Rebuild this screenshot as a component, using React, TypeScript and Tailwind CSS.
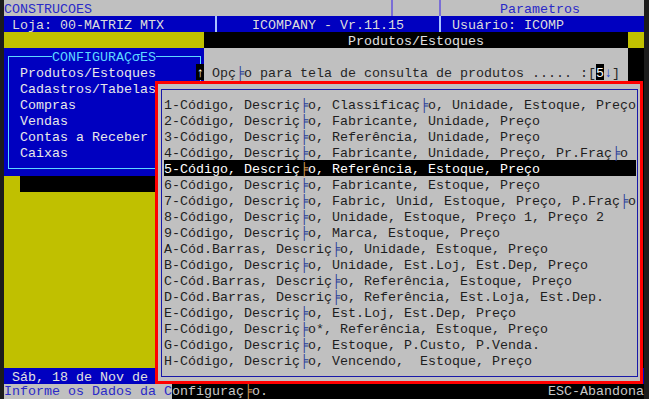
import React from 'react';

const mono = "font-['Liberation_Mono','DejaVu_Sans_Mono',monospace] text-[13.333px] leading-[19px] whitespace-pre";

const items = [
  '1-Código, Descriç╞o, Classificaç╞o, Unidade, Estoque, Preço',
  '2-Código, Descriç╞o, Fabricante, Unidade, Preço',
  '3-Código, Descriç╞o, Referência, Unidade, Preço',
  '4-Código, Descriç╞o, Fabricante, Unidade, Preço, Pr.Fraç╞o',
  '5-Código, Descriç╞o, Referência, Estoque, Preço',
  '6-Código, Descriç╞o, Fabricante, Estoque, Preço',
  '7-Código, Descriç╞o, Fabric, Unid, Estoque, Preço, P.Fraç╞o',
  '8-Código, Descriç╞o, Unidade, Estoque, Preço 1, Preço 2',
  '9-Código, Descriç╞o, Marca, Estoque, Preço',
  'A-Cód.Barras, Descriç╞o, Unidade, Estoque, Preço',
  'B-Código, Descriç╞o, Unidade, Est.Loj, Est.Dep, Preço',
  'C-Cód.Barras, Descriç╞o, Referência, Estoque, Preço',
  'D-Cód.Barras, Descriç╞o, Referência, Est.Loja, Est.Dep.',
  'E-Código, Descriç╞o, Est.Loj, Est.Dep, Preço',
  'F-Código, Descriç╞o*, Referência, Estoque, Preço',
  'G-Código, Descriç╞o, Estoque, P.Custo, P.Venda.',
  'H-Código, Descriç╞o, Vencendo,  Estoque, Preço',
];

const menu = ['Cadastros/Tabelas', 'Compras', 'Vendas', 'Contas a Receber', 'Caixas'];

// the terminal prints "ã" as a box char, keep it
function Txt({ text, bar }: { text: string; bar: string }) {
  const parts = text.split('╞');
  return (
    <>
      {parts.map((p, i) => (
        <React.Fragment key={i}>
          {i > 0 && <span className={bar}>╞</span>}
          {p}
        </React.Fragment>
      ))}
    </>
  );
}

function Sep({ line }: { line: string }) {
  return (
    <span className="inline-flex w-2 h-4 justify-center">
      <span className={line} />
    </span>
  );
}

export default function App() {
  return (
    <div className={`relative w-[649px] h-[399px] overflow-hidden bg-[#1c1c1c] pl-[4px] ${mono}`}>
      <div className="w-[640px] flex flex-col">
        {/* top bar */}
        <div className="h-4 bg-[#c0c0c0] text-[#2a2ac8] flex">
          <span>{'CONSTRUCOES                                     '}</span>
          <Sep line="w-[2px] h-full bg-[#7a6ed6]" />
          <span>{'     '}</span>
          <Sep line="w-[2px] h-full bg-[#7a6ed6]" />
          <span>{'       Parametros'}</span>
        </div>
        <div className="h-4 bg-[#0000c0] text-[#dcdcdc] flex">
          <span>{' Loja: 00-MATRIZ MTX      '}</span>
          <Sep line="w-[2px] h-full bg-[#a9c2ff]" />
          <span>{'    ICOMPANY - Vr.11.15    '}</span>
          <Sep line="w-[2px] h-full bg-[#a9c2ff]" />
          <span>{' Usuário: ICOMP'}</span>
        </div>
        <div className="h-4 flex">
          <div className="w-[200px] bg-[#c0c000]" />
          <div className="w-[424px] bg-black text-[#e0e0e0] text-center">Produtos/Estoques</div>
          <div className="flex-1 bg-[#c0c000]" />
        </div>

        {/* body */}
        <div className="flex h-[320px]">
          <div className="w-[200px] flex flex-col">
            <div className="h-[128px] bg-[#0000c0] relative">
              <div className="absolute left-[4px] right-[3px] top-[8px] bottom-[7px] border border-[#5fd7ff]" />
              <div className="relative h-4 flex pl-[48px]">
                <span className="bg-[#0000c0] text-[#5fd7ff]">CONFIGURAÇσES</span>
              </div>
              <div className="relative h-4 flex justify-between pl-[16px] text-[#e8e8e8]">
                <span>Produtos/Estoques</span>
                <span className="w-2 bg-black text-white text-center">↑</span>
              </div>
              {menu.map((m) => (
                <div key={m} className="relative h-4 pl-[16px] text-[#e8e8e8]">{m}</div>
              ))}
            </div>
            <div className="h-4 flex">
              <div className="w-4 bg-[#c0c000]" />
              <div className="flex-1 bg-black" />
            </div>
            <div className="flex-1 bg-[#c0c000]" />
          </div>
          <div className="w-[424px] bg-[#c0c0c0] text-[#262626]">
            <div className="h-4" />
            <div className="h-4 flex pl-2">
              <span>
                <Txt text="Opç╞o para tela de consulta de produtos ..... :[" bar="text-[#2b3f9a]" />
              </span>
              <span className="bg-black text-white">5</span>
              <span className="text-[#2040d0]">↓</span>
              <span>]</span>
            </div>
          </div>
          <div className="flex-1 bg-black" />
        </div>

        <div className="h-4 bg-[#0000c0] text-[#e0e0e0]">{' Sáb, 18 de Nov de 2023'}</div>
        <div className="h-4 flex bg-black leading-[16px]">
          <span className="bg-[#c0c0c0] text-[#2a2ac8]">Informe os Dados da C</span>
          <span className="flex-1 text-[#c8c8c8]">
            <Txt text="onfiguraç╞o." bar="text-[#d49a50]" />
          </span>
          <span className="text-[#c8c8c8]">ESC-Abandona</span>
        </div>
      </div>

      {/* options popup */}
      <div className="absolute left-[155px] top-[81px] w-[488px] h-[303px] border-[3px] border-[#ff0000] bg-[#c0c0c0] pt-[5px] pl-[3px] pr-[2px] pb-[4px]">
        <div className="h-full border border-[#1818a8] pt-[6px] pl-[2px]">
          {items.map((t, i) => (
            <div key={t} className={i === 4 ? 'h-4 w-[472px] bg-black text-white' : 'h-4 w-[472px] text-[#1e1e1e]'}>
              <Txt text={t} bar={i === 4 ? 'text-[#d49a50]' : 'text-[#2b3f9a]'} />
            </div>
          ))}
        </div>
      </div>
    </div>
  );
}
